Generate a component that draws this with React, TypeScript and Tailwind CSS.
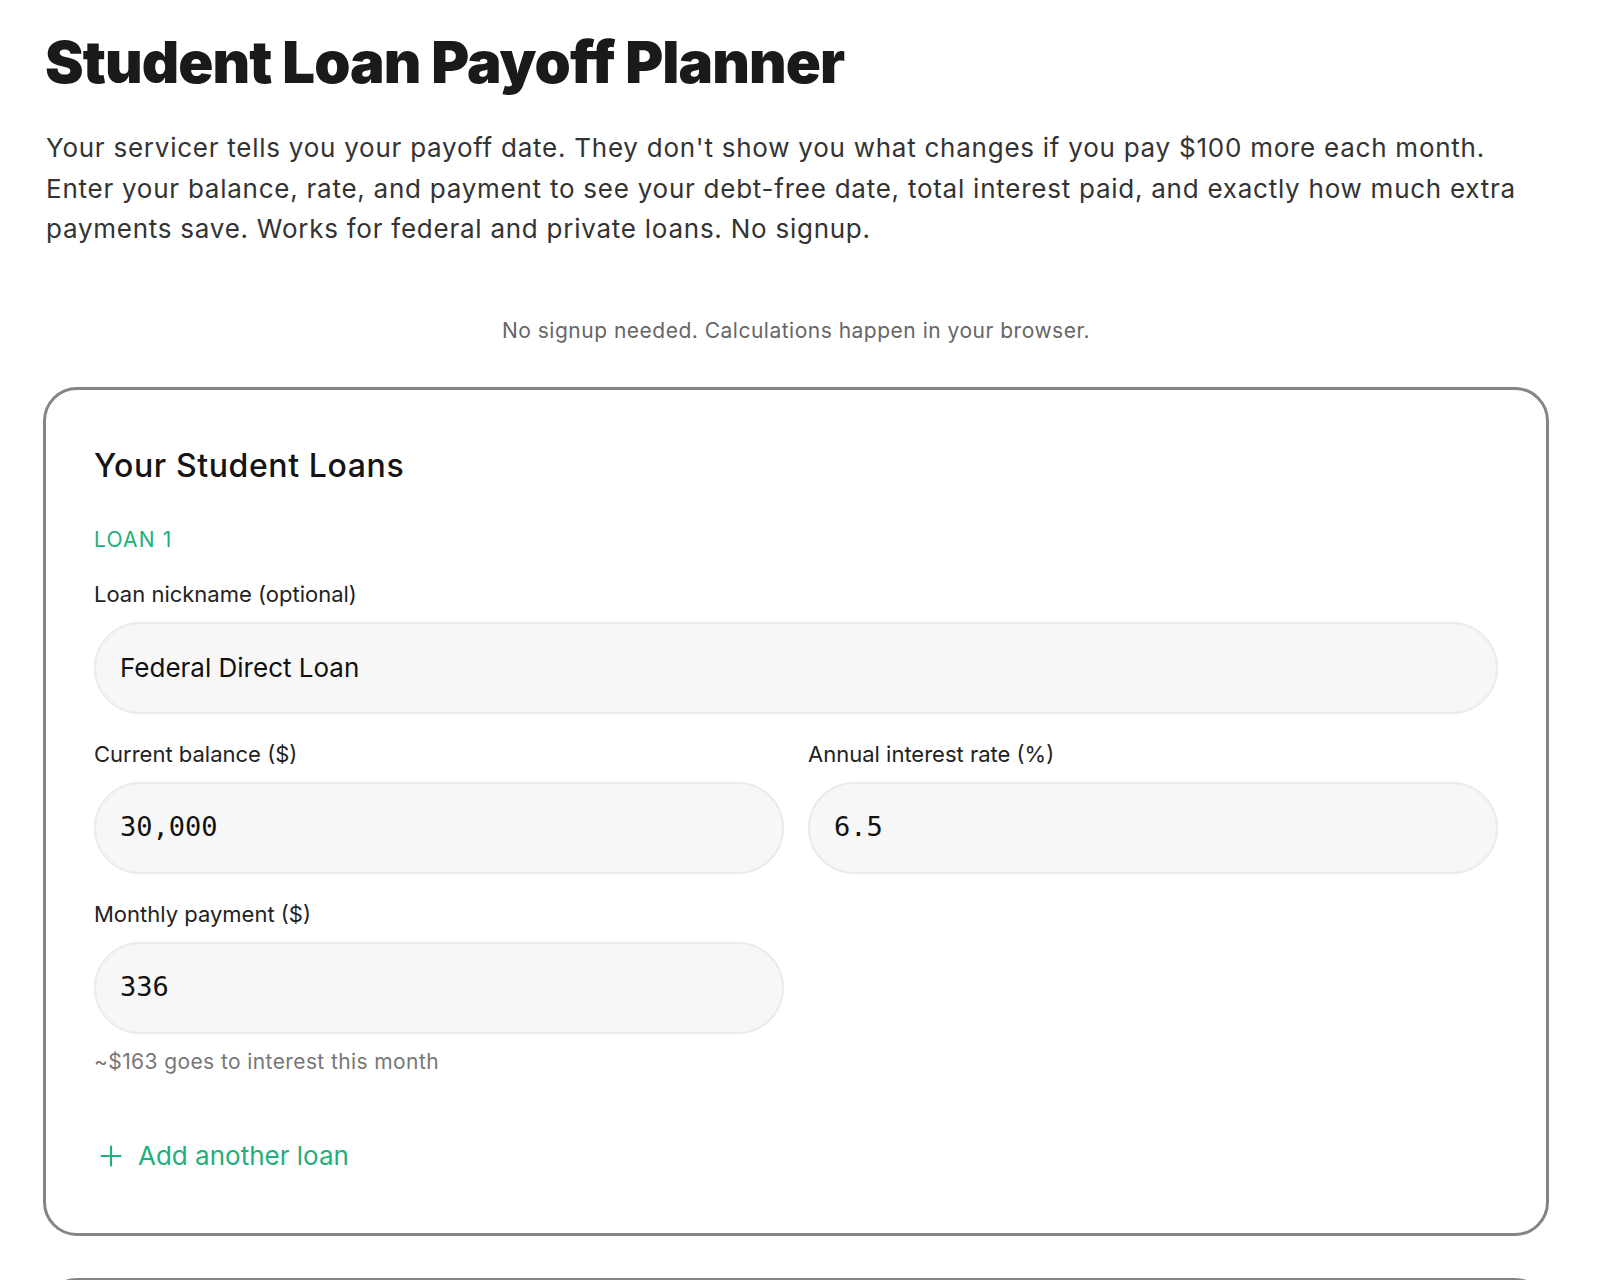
import React from "react";

const sans = { fontFamily: 'Inter, "Noto Sans", sans-serif' };

function Label({ children }: { children: React.ReactNode }) {
  return (
    <div className="text-[22px] leading-[32px] text-[#222] mb-[12px]">{children}</div>
  );
}

function Field({ label, value, mono }: { label: string; value: string; mono?: boolean }) {
  return (
    <div className="flex flex-col">
      <Label>{label}</Label>
      <div
        className={`h-[92px] rounded-full bg-[#f7f7f7] border-[2px] border-[#ebebeb] flex items-center pl-[24px] text-[#111] ${
          mono ? "text-[27px] font-['DejaVu_Sans_Mono',monospace]" : "text-[26px]"
        }`}
      >
        {value}
      </div>
    </div>
  );
}

export default function App() {
  return (
    <div className="w-[1600px] min-h-[1280px] bg-white overflow-hidden" style={sans}>
      <div className="pl-[43px] pr-[51px] pt-[30px]">
        <h1 className="text-[58px] leading-[64px] font-black tracking-[-0.9px] text-[#1a1a1a] pl-[2px]">
          Student Loan Payoff Planner
        </h1>
        <p className="mt-[34px] text-[26px] leading-[40.5px] tracking-[0.75px] text-[#333] pl-[3px] whitespace-nowrap">
          Your servicer tells you your payoff date. They don't show you what changes if you pay $100 more each month.
          <br />
          Enter your balance, rate, and payment to see your debt-free date, total interest paid, and exactly how much extra
          <br />
          payments save. Works for federal and private loans. No signup.
        </p>
        <p className="mt-[66px] text-center text-[21px] leading-[30px] tracking-[0.5px] text-[#666]">
          No signup needed. Calculations happen in your browser.
        </p>

        <div className="mt-[41px] border-[3px] border-[#858585] rounded-[34px] px-[48px] pt-[56px] pb-[61px]">
          <h2 className="text-[32px] leading-[40px] font-medium tracking-[0.6px] text-[#141414]">Your Student Loans</h2>
          <div className="mt-[40px] text-[21px] leading-[28px] text-[#22b07a] tracking-[1.2px]">LOAN 1</div>
          <div className="mt-[24px] flex flex-col gap-[24px]">
            <Field label="Loan nickname (optional)" value="Federal Direct Loan" />
            <div className="grid grid-cols-2 gap-x-[24px]">
              <Field label="Current balance ($)" value="30,000" mono />
              <Field label="Annual interest rate (%)" value="6.5" mono />
            </div>
            <div className="grid grid-cols-2 gap-x-[24px]">
              <div>
                <Field label="Monthly payment ($)" value="336" mono />
                <div className="mt-[14px] text-[21px] leading-[28px] tracking-[0.4px] text-[#777]">~$163 goes to interest this month</div>
              </div>
            </div>
          </div>
          <div className="mt-[64px] flex items-center gap-[16px] text-[#22b07a] text-[26px] leading-[32px] pl-[6px]">
            <svg width="22" height="22" viewBox="0 0 22 22" fill="none" stroke="currentColor" strokeWidth="2.2" strokeLinecap="round">
              <path d="M11 1.5v19M1.5 11h19" />
            </svg>
            <span>Add another loan</span>
          </div>
        </div>

        <div className="mt-[42px] h-[300px] border-[3px] border-[#858585] rounded-[34px]" />
      </div>
    </div>
  );
}
